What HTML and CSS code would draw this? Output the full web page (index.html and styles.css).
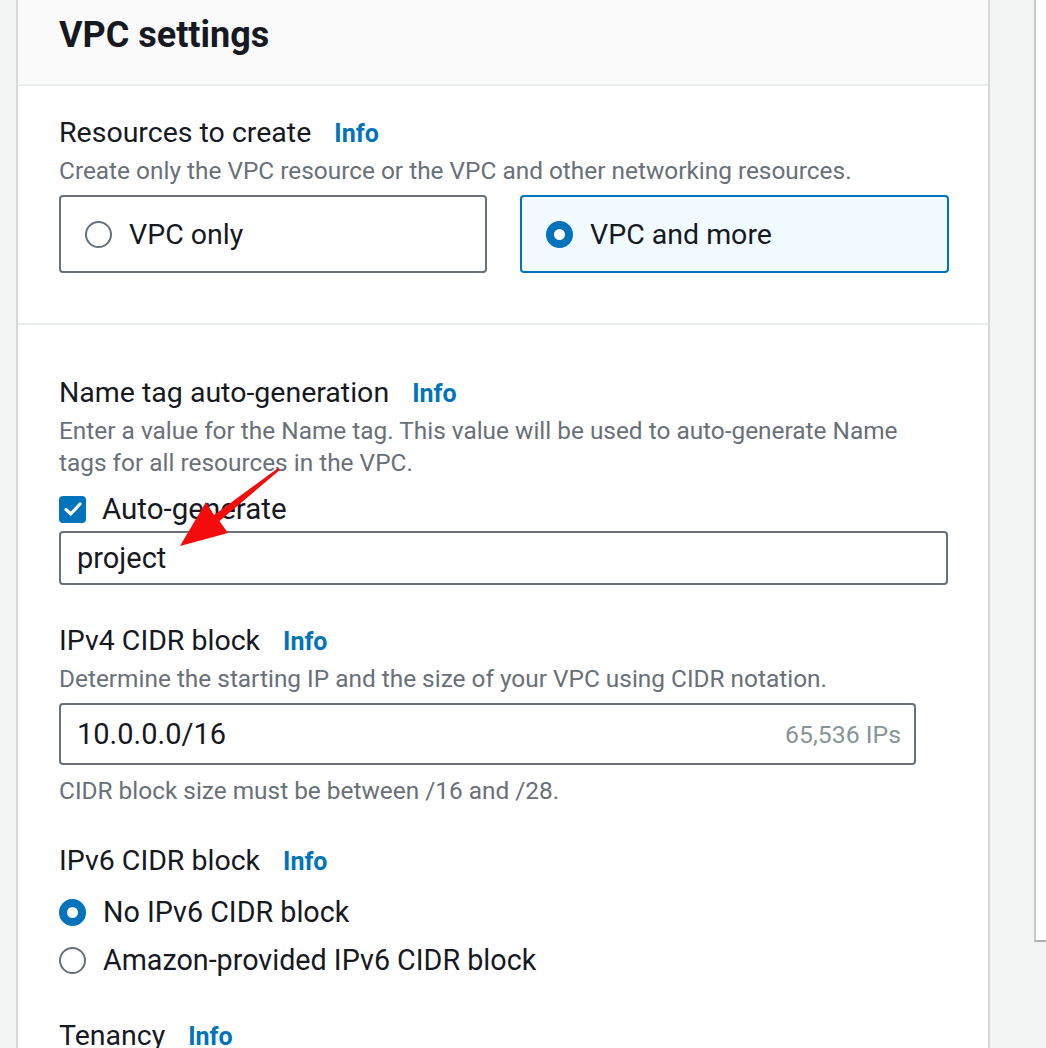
FILE: index.html
```html
<!DOCTYPE html>
<html>
<head>
<meta charset="utf-8">
<link rel="stylesheet" href="styles.css">
</head>
<body>
<div class="page">
  <div class="left-gutter"></div>
  <main class="card">
    <header class="card-header"><h2 class="title">VPC settings</h2></header>

    <section class="section first">
      <div class="label">Resources to create <a class="info">Info</a></div>
      <div class="desc">Create only the VPC resource or the VPC and other networking resources.</div>
      <div class="tiles">
        <div class="tile"><span class="radio"></span><span>VPC only</span></div>
        <div class="tile selected"><span class="radio checked"></span><span>VPC and more</span></div>
      </div>
    </section>

    <section class="section second">
      <div class="label">Name tag auto-generation <a class="info">Info</a></div>
      <div class="desc">Enter a value for the Name tag. This value will be used to auto-generate Name tags for all resources in the VPC.</div>
      <div class="check-row">
        <span class="checkbox"><svg width="18" height="14" viewBox="0 0 18 14"><path d="M2 7.5 L6.8 12 L16 2" fill="none" stroke="#fff" stroke-width="3.2" stroke-linecap="round" stroke-linejoin="round"/></svg></span>
        <span>Auto-generate</span>
      </div>
      <div class="input input-name"><span>project</span></div>

      <div class="label mt-ipv4">IPv4 CIDR block <a class="info">Info</a></div>
      <div class="desc">Determine the starting IP and the size of your VPC using CIDR notation.</div>
      <div class="input input-cidr"><span>10.0.0.0/16</span><span class="suffix">65,536 IPs</span></div>
      <div class="desc constraint">CIDR block size must be between /16 and /28.</div>

      <div class="label mt-ipv6">IPv6 CIDR block <a class="info">Info</a></div>
      <div class="radio-list">
        <div class="radio-row"><span class="radio checked"></span><span>No IPv6 CIDR block</span></div>
        <div class="radio-row"><span class="radio"></span><span>Amazon-provided IPv6 CIDR block</span></div>
      </div>

      <div class="label mt-tenancy">Tenancy <a class="info">Info</a></div>
    </section>
  </main>
  <div class="right-gutter"></div>
  <aside class="side-panel"></aside>
</div>
<svg class="arrow" width="1046" height="1048" viewBox="0 0 1046 1048">
  <polygon points="180,546 228,533 219.5,521 279.8,470 278.2,468 214,515 206,502" fill="#f40c0c"/>
</svg>
</body>
</html>
```
FILE: styles.css
```css
html, body {
  margin: 0;
  padding: 0;
}
body {
  background: #f2f3f3;
  font-family: Roboto, "Noto Sans", sans-serif;
  color: #16191f;
  width: 1046px;
  height: 1048px;
  overflow: hidden;
  position: relative;
}
.page {
  display: flex;
  align-items: flex-start;
  height: 1048px;
}
.left-gutter {
  width: 16px;
  height: 1048px;
  background: #f2f3f3;
  border-right: 2px solid #d5d9d9;
  flex: none;
}
.card {
  width: 970px;
  height: 1048px;
  background: #fff;
  border-right: 2px solid #d5d9d9;
  flex: none;
}
.card-header {
  height: 84px;
  background: #fafafa;
  border-bottom: 2px solid #eaeded;
  padding-left: 41px;
  display: flex;
  align-items: center;
}
.title {
  margin: 0;
  font-size: 36px;
  font-weight: 700;
  position: relative;
  top: -7px;
}
.section {
  padding: 0 41px;
}
.section.first {
  padding-top: 27px;
  padding-bottom: 50px;
  border-bottom: 2px solid #eaeded;
}
.section.second {
  padding-top: 48px;
}
.label {
  font-size: 28.5px;
  line-height: 40px;
  height: 40px;
  white-space: nowrap;
}
.info {
  font-size: 25px;
  font-weight: 700;
  color: #0073bb;
  margin-left: 16px;
}
.desc {
  font-size: 24.4px;
  line-height: 32px;
  color: #687078;
  margin-top: 2px;
  padding-right: 20px;
}
.tiles {
  display: flex;
  gap: 33px;
  margin-top: 8px;
}
.tile {
  flex: none;
  height: 74px;
  border: 2px solid #687078;
  border-radius: 4px;
  display: flex;
  align-items: center;
  padding-left: 24px;
  box-sizing: content-box;
  font-size: 28.5px;
  gap: 17px;
  width: 400px;
}
.tile.selected {
  border-color: #0073bb;
  background: #f1faff;
  width: 401px;
}
.radio {
  width: 23px;
  height: 23px;
  border: 2px solid #687078;
  border-radius: 50%;
  display: inline-block;
  flex: none;
  background: #fff;
}
.radio.checked {
  width: 11px;
  height: 11px;
  border: 8px solid #0073bb;
}
.check-row {
  display: flex;
  align-items: center;
  gap: 16px;
  height: 40px;
  margin-top: 10px;
  font-size: 29.5px;
}
.checkbox {
  width: 27px;
  height: 27px;
  background: #0073bb;
  border-radius: 4px;
  display: flex;
  align-items: center;
  justify-content: center;
  flex: none;
}
.input {
  border: 2px solid #687078;
  border-radius: 4px;
  display: flex;
  align-items: center;
  justify-content: space-between;
  padding: 0 13px 0 16px;
  font-size: 29px;
  box-sizing: border-box;
  margin-top: 2px;
}
.input-name {
  width: 889px;
  height: 54px;
}
.input-cidr {
  width: 857px;
  height: 62px;
  margin-top: 8px;
}
.suffix {
  font-size: 24.8px;
  color: #879596;
}
.constraint {
  margin-top: 10px;
}
.mt-ipv4 { margin-top: 36px; }
.mt-ipv6 { margin-top: 34px; }
.mt-tenancy { margin-top: 36px; }
.radio-list {
  margin-top: 11px;
  display: flex;
  flex-direction: column;
  gap: 8px;
}
.radio-row {
  display: flex;
  align-items: center;
  gap: 17px;
  height: 40px;
  font-size: 28.7px;
}
.right-gutter {
  width: 44px;
  height: 1048px;
  flex: none;
}
.side-panel {
  flex: none;
  width: 10px;
  height: 940px;
  background: #fff;
  border-left: 2px solid #c4cbcb;
  border-bottom: 2px solid #aab2b2;
}
.arrow {
  position: absolute;
  left: 0;
  top: 0;
  pointer-events: none;
}
```
